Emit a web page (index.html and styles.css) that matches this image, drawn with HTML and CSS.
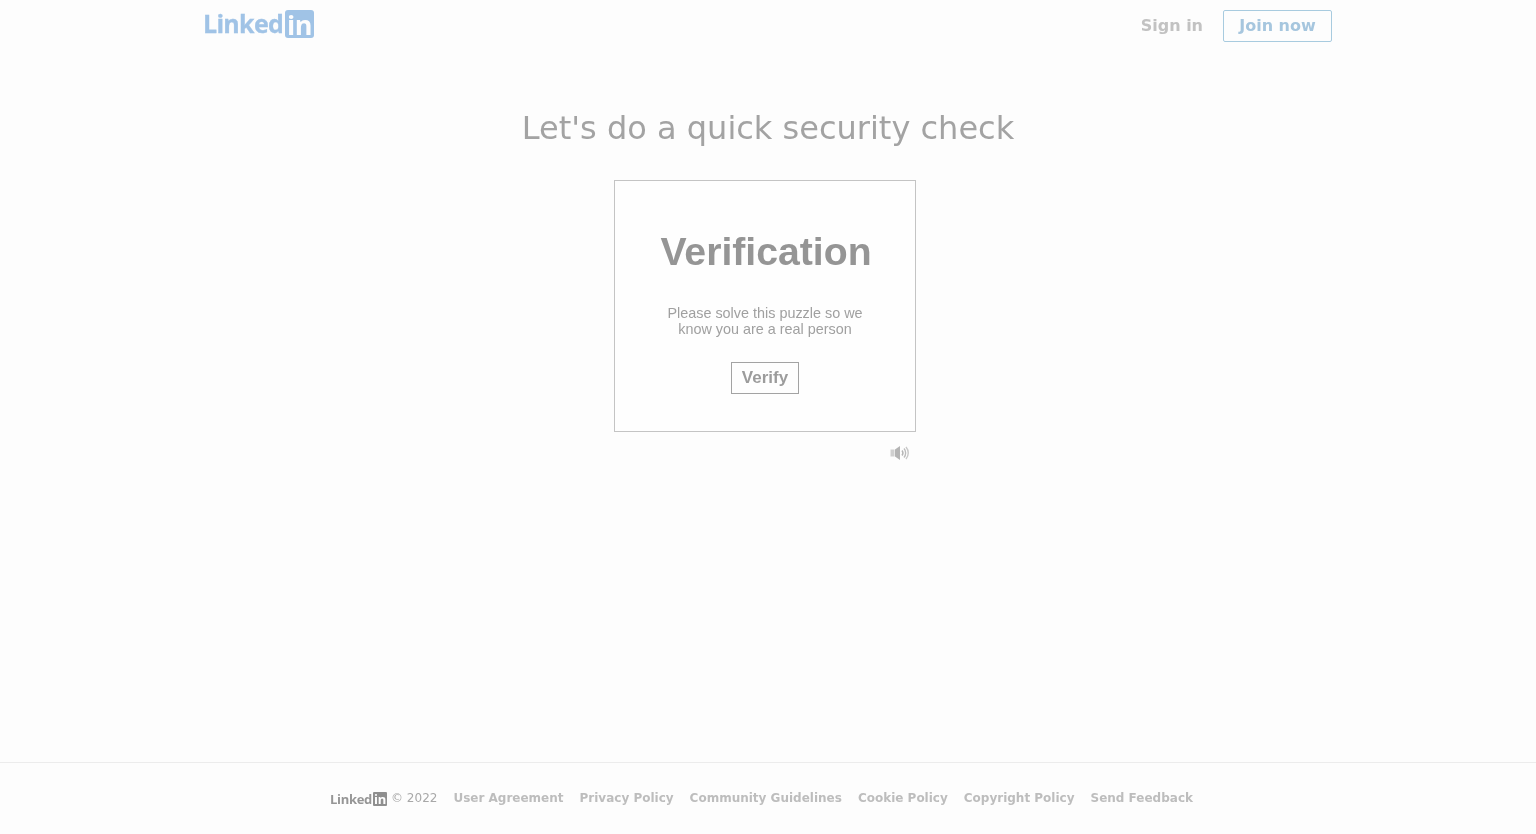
FILE: index.html
```html
<!DOCTYPE html>
<html>
<head>
  <meta charset="UTF-8">
  <title>LinkedIn Security Check</title>
  <link rel="stylesheet" href="styles.css">
</head>
<body>
  <div class="page">
    <header class="top-bar">
      <a class="logo" href="#">
        <span class="logo-word">Linked</span>
        <span class="logo-box">in</span>
      </a>
      <nav class="top-nav">
        <a class="sign-in" href="#">Sign in</a>
        <a class="join-now" href="#">Join now</a>
      </nav>
    </header>

    <main class="content">
      <h1 class="page-title">Let's do a quick security check</h1>

      <div class="captcha-wrap">
        <div class="captcha-card">
          <h2 class="captcha-title">Verification</h2>
          <p class="captcha-text">Please solve this puzzle so we<br>know you are a real person</p>
          <button class="verify-button">Verify</button>
        </div>
        <div class="captcha-tools">
          <!-- audio challenge -->
          <svg class="audio-icon" width="20" height="16" viewBox="0 0 20 16" fill="none">
            <rect x="0.5" y="4.5" width="4" height="7" fill="#cfcfcf"/>
            <path d="M5 4.5 L10 1 V15 L5 11.5 Z" fill="#b4b4b4"/>
            <path d="M12 5.5 C13.2 7 13.2 9 12 10.5" stroke="#b4b4b4" stroke-width="1.4"/>
            <path d="M14 3.5 C16.2 6 16.2 10 14 12.5" stroke="#bcbcbc" stroke-width="1.4"/>
            <path d="M16 2 C19 5.5 19 10.5 16 14" stroke="#c8c8c8" stroke-width="1.4"/>
          </svg>
        </div>
      </div>
    </main>

    <footer class="page-footer">
      <a class="footer-logo" href="#">
        <span class="footer-word">Linked</span>
        <span class="footer-box">in</span>
      </a>
      <span class="copyright">© 2022</span>
      <a class="footer-link" href="#">User Agreement</a>
      <a class="footer-link" href="#">Privacy Policy</a>
      <a class="footer-link" href="#">Community Guidelines</a>
      <a class="footer-link" href="#">Cookie Policy</a>
      <a class="footer-link" href="#">Copyright Policy</a>
      <a class="footer-link" href="#">Send Feedback</a>
    </footer>
  </div>
</body>
</html>
```

FILE: styles.css
```css
html, body {
  height: 100%;
}

body {
  margin: 0;
  background-color: #fdfdfd;
  font-family: "DejaVu Sans", sans-serif;
  color: #999;
}

a {
  text-decoration: none;
}

.page {
  height: 100%;
  display: flex;
  flex-direction: column;
  will-change: transform;
}

.top-bar {
  width: 1128px;
  height: 52px;
  margin: 0 auto;
  display: flex;
  justify-content: space-between;
  align-items: flex-start;
}

.logo {
  display: flex;
  align-items: center;
  gap: 2px;
  height: 28px;
  margin-top: 10px;
  color: #a0c3e6;
}

.logo-word {
  margin: -2px 0 0 -1px;
  font-family: "Open Sans", sans-serif;
  font-size: 25px;
  font-weight: 700;
  letter-spacing: -0.7px;
  -webkit-text-stroke: 0.3px #a0c3e6;
}

.logo-box {
  width: 29px;
  height: 28px;
  background-color: #a0c3e6;
  border-radius: 3px;
  color: #fdfdfd;
  font-family: "Open Sans", sans-serif;
  font-size: 27px;
  font-weight: 700;
  line-height: 30px;
  text-align: center;
  letter-spacing: -0.3px;
}

.top-nav {
  display: flex;
  align-items: center;
  gap: 20px;
  margin-top: 10px;
}

.sign-in {
  margin-top: -2px;
  font-size: 16px;
  font-weight: 700;
  color: #c2c2c2;
}

.join-now {
  box-sizing: border-box;
  width: 109px;
  height: 32px;
  border: 1px solid #a8cbdf;
  border-radius: 2px;
  font-size: 16px;
  font-weight: 700;
  line-height: 29px;
  text-align: center;
  color: #a6c6de;
}

.content {
  flex: 1;
  display: flex;
  flex-direction: column;
  align-items: center;
}

.page-title {
  margin: 54px 0 30px;
  font-size: 32px;
  font-weight: 400;
  line-height: 44px;
  color: #a3a3a3;
}

.captcha-wrap {
  width: 308px;
}

.captcha-card {
  box-sizing: border-box;
  width: 302px;
  height: 252px;
  padding-top: 47px;
  border: 1px solid #c4c4c4;
  background-color: #fefefe;
  font-family: "Liberation Sans", Arial, sans-serif;
  text-align: center;
}

.captcha-title {
  margin: 0 0 29px;
  padding-left: 2px;
  font-size: 39.2px;
  font-weight: 700;
  line-height: 48px;
  color: #959595;
}

.captcha-text {
  margin: 0 0 25px;
  font-size: 14.4px;
  line-height: 16px;
  color: #a0a0a0;
}

.verify-button {
  box-sizing: border-box;
  width: 68px;
  height: 32px;
  padding: 0;
  border: 1px solid #a3a3a3;
  border-radius: 0;
  background-color: #fefefe;
  font-family: "Liberation Sans", Arial, sans-serif;
  font-size: 17px;
  font-weight: 700;
  color: #9c9c9c;
  cursor: pointer;
}

.captcha-tools {
  display: flex;
  justify-content: flex-end;
  width: 296px;
  margin-top: 13px;
}

.audio-icon {
  display: block;
}

.page-footer {
  box-sizing: border-box;
  height: 72px;
  padding: 0 14px 2px 0;
  border-top: 1px solid #ececec;
  display: flex;
  justify-content: center;
  align-items: center;
  gap: 16px;
  font-size: 12px;
}

.footer-logo {
  display: flex;
  align-items: center;
  gap: 1px;
  margin: 3px -12px 0 1px;
  color: #969696;
}

.footer-word {
  font-family: "Open Sans", sans-serif;
  font-size: 13px;
  font-weight: 700;
  letter-spacing: -0.3px;
}

.footer-box {
  width: 14px;
  height: 14px;
  background-color: #8f8f8f;
  border-radius: 1px;
  color: #fdfdfd;
  font-family: "Open Sans", sans-serif;
  font-size: 13px;
  font-weight: 700;
  line-height: 15px;
  text-align: center;
  letter-spacing: -0.3px;
}

.copyright {
  color: #a8a8a8;
}

.footer-link {
  font-weight: 700;
  color: #bdbdbd;
}
```
